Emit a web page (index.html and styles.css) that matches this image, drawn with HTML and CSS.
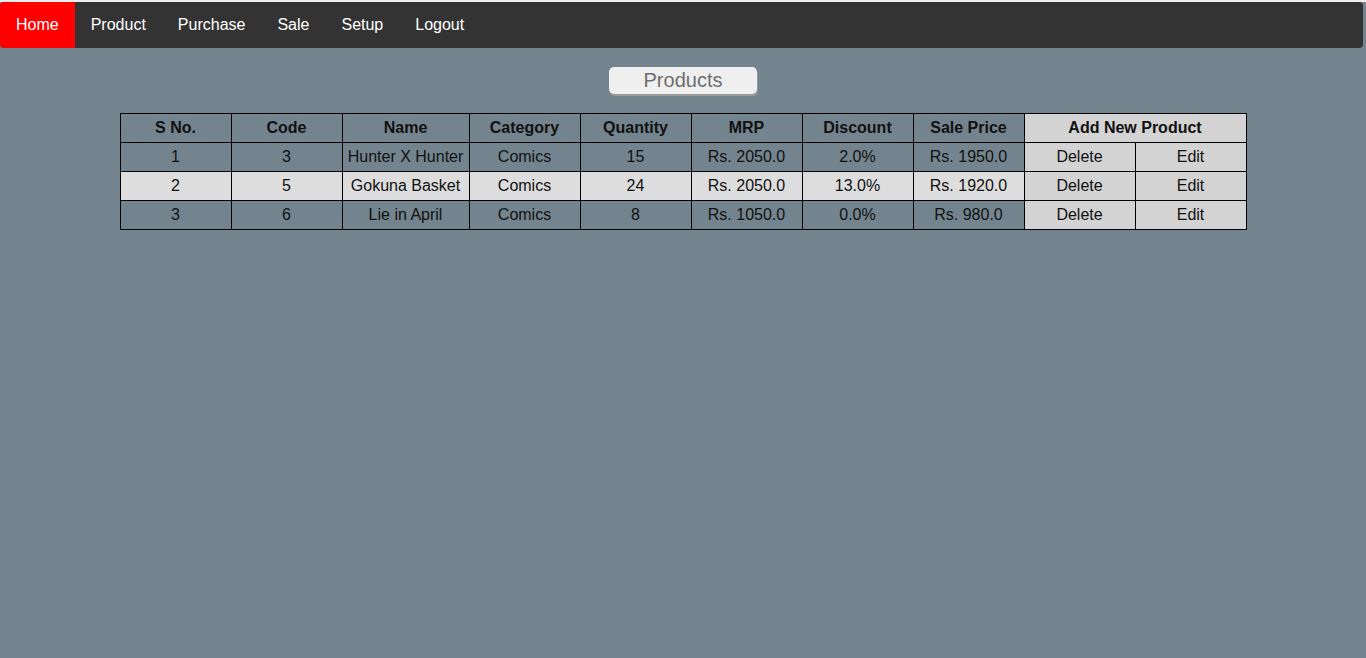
FILE: index.html
```html
<!DOCTYPE html>
<html>
<head>
<meta charset="utf-8">
<title>Products</title>
<link rel="stylesheet" href="styles.css">
</head>
<body>
<div class="topline"></div>
<ul class="nav">
  <li><a class="active" href="#">Home</a></li>
  <li><a href="#">Product</a></li>
  <li><a href="#">Purchase</a></li>
  <li><a href="#">Sale</a></li>
  <li><a href="#">Setup</a></li>
  <li><a href="#">Logout</a></li>
</ul>
<div class="title-wrap"><button class="title-btn">Products</button></div>
<table class="products">
  <colgroup>
    <col class="c"><col class="c"><col class="c-name"><col class="c"><col class="c"><col class="c"><col class="c"><col class="c"><col class="c"><col class="c">
  </colgroup>
  <thead>
    <tr>
      <th>S No.</th><th>Code</th><th>Name</th><th>Category</th><th>Quantity</th><th>MRP</th><th>Discount</th><th>Sale Price</th><th colspan="2" class="act">Add New Product</th>
    </tr>
  </thead>
  <tbody>
    <tr>
      <td>1</td><td>3</td><td>Hunter X Hunter</td><td>Comics</td><td>15</td><td>Rs. 2050.0</td><td>2.0%</td><td>Rs. 1950.0</td><td class="act">Delete</td><td class="act">Edit</td>
    </tr>
    <tr class="alt">
      <td>2</td><td>5</td><td>Gokuna Basket</td><td>Comics</td><td>24</td><td>Rs. 2050.0</td><td>13.0%</td><td>Rs. 1920.0</td><td class="act">Delete</td><td class="act">Edit</td>
    </tr>
    <tr>
      <td>3</td><td>6</td><td>Lie in April</td><td>Comics</td><td>8</td><td>Rs. 1050.0</td><td>0.0%</td><td>Rs. 980.0</td><td class="act">Delete</td><td class="act">Edit</td>
    </tr>
  </tbody>
</table>
</body>
</html>
```
FILE: styles.css
```css
html, body {
  margin: 0;
  padding: 0;
}
body {
  background: #73848e;
  font-family: "Liberation Sans", Arial, sans-serif;
  min-height: 658px;
}
.topline {
  height: 2px;
  background: #eeeeee;
}
.nav {
  list-style: none;
  margin: 0 3px 0 0;
  padding: 0;
  display: flex;
  background: #333333;
  border-radius: 4px;
  overflow: hidden;
  height: 46px;
}
.nav li a {
  display: block;
  color: #ffffff;
  text-decoration: none;
  font-size: 16px;
  line-height: 45px;
  padding: 0 16px;
}
.nav li a.active {
  background: #ff0000;
  height: 46px;
}
.title-wrap {
  display: flex;
  justify-content: center;
  padding-top: 19px;
}
.title-btn {
  width: 148px;
  height: 27px;
  padding: 0;
  border: none;
  border-radius: 5px;
  background: #efefef;
  color: #6e6e6e;
  font-family: "Liberation Sans", Arial, sans-serif;
  font-size: 20px;
  line-height: 27px;
  box-shadow: 1px 2px 0 #9a9a9a;
}
.products {
  margin: 19px auto 0;
  border-collapse: collapse;
  table-layout: fixed;
  width: 1127px;
  color: #111111;
  font-size: 16px;
}
.products col.c { width: 111px; }
.products col.c-name { width: 127px; }
.products th, .products td {
  border: 1px solid #000000;
  text-align: center;
  padding: 5px 0;
  line-height: 18px;
  white-space: nowrap;
}
.products th {
  font-weight: bold;
}
.products tr.alt td {
  background: #dddddd;
}
.products .act,
.products tr.alt td.act {
  background: #d3d3d3;
}
```
